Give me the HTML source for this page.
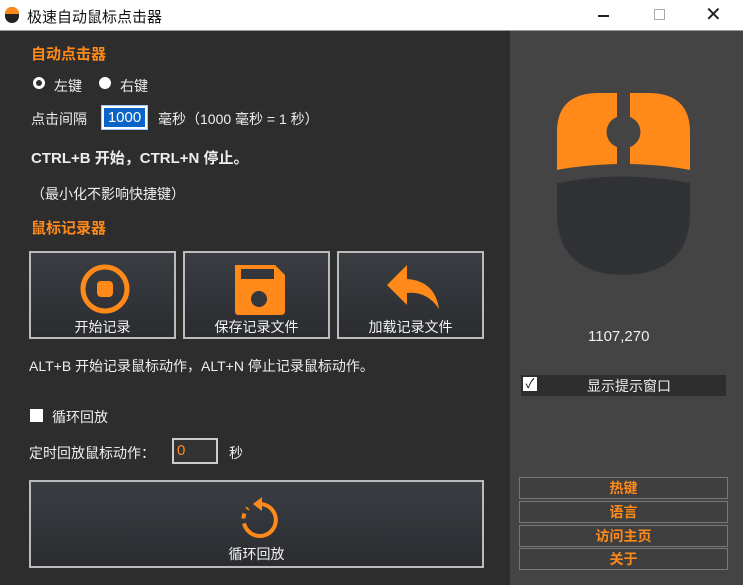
<!DOCTYPE html>
<html><head><meta charset="utf-8"><style>
*{margin:0;padding:0;box-sizing:border-box}
body{width:743px;height:585px;overflow:hidden;background:#2d2d2d;font-family:"Liberation Sans","Noto Sans CJK SC",sans-serif;color:#eee;position:relative;font-size:14px}
.a{position:absolute;white-space:nowrap}
.title{left:0;top:0;width:743px;height:31px;background:#fff;border-bottom:1px solid #999}
.or{color:#ff8a1a;font-weight:bold;font-size:15px}
.btn{position:absolute;border:2px solid #bbb;background:linear-gradient(#3a3d42,#2a2c30);color:#f2f2f2;font-size:14px;text-align:center}
.right{left:510px;top:31px;width:233px;height:554px;background:#444}
.rb{position:absolute;left:519px;width:209px;height:22px;border:1px solid #777;background:#3f3f3f;color:#ff8a1a;font-weight:bold;text-align:center;font-size:14px;line-height:20px}
</style></head><body>
<div class="a title">
  <div class="a" style="left:5px;top:7px;width:14px;height:16px;border-radius:7px;background:#222;overflow:hidden"><div style="height:7px;background:#ff8a1a"></div></div>
  <div class="a" style="left:27px;top:6px;color:#111;font-size:15px">极速自动鼠标点击器</div>
  <div class="a" style="left:598px;top:15px;width:11px;height:1.5px;background:#222"></div>
  <div class="a" style="left:654px;top:9px;width:11px;height:11px;border:1px solid #aaa"></div>
  <div class="a" style="left:705px;top:2px;color:#222;font-size:20px">✕</div>
</div>
<div class="a right"></div>
<div class="a or" style="left:31px;top:43px">自动点击器</div>
<div class="a" style="left:33px;top:77px;width:12px;height:12px;border:3px solid #fff;border-radius:50%"></div>
<div class="a" style="left:54px;top:76px">左键</div>
<div class="a" style="left:99px;top:77px;width:12px;height:12px;background:#fff;border-radius:50%"></div>
<div class="a" style="left:120px;top:76px">右键</div>
<div class="a" style="left:31px;top:109px">点击间隔</div>
<div class="a" style="left:101px;top:105px;width:47px;height:25px;border:1px solid #9cf;background:#fff"><div style="margin:2px;background:#0a64c8;color:#fff;font-size:15px;line-height:19px;text-align:center">1000</div></div>
<div class="a" style="left:158px;top:109px">毫秒（1000 毫秒 = 1 秒）</div>
<div class="a" style="left:31px;top:147px;font-weight:bold;font-size:15px">CTRL+B 开始，CTRL+N 停止。</div>
<div class="a" style="left:31px;top:184px">（最小化不影响快捷键）</div>
<div class="a or" style="left:31px;top:217px">鼠标记录器</div>

<div class="btn" style="left:29px;top:251px;width:147px;height:88px">
<svg width="52" height="52" viewBox="0 0 52 52" style="position:absolute;left:48px;top:10px"><circle cx="26" cy="26" r="22" fill="none" stroke="#ff8a1a" stroke-width="5"/><rect x="18" y="18" width="16" height="16" rx="4" fill="#ff8a1a"/></svg>
<div class="a" style="left:0;width:143px;top:64px">开始记录</div></div>
<div class="btn" style="left:183px;top:251px;width:147px;height:88px">
<svg width="52" height="52" viewBox="0 0 52 52" style="position:absolute;left:48px;top:10px"><path d="M2 2H42L52 12V48Q52 52 48 52H5Q2 52 2 48Z" fill="#ff8a1a"/><rect x="8" y="6" width="33" height="10" fill="#33363a"/><circle cx="26" cy="36" r="8" fill="#33363a"/></svg>
<div class="a" style="left:0;width:143px;top:64px">保存记录文件</div></div>
<div class="btn" style="left:337px;top:251px;width:147px;height:88px">
<svg width="56" height="50" viewBox="0 0 56 50" style="position:absolute;left:46px;top:12px"><path d="M22 0L2 20L22 40V28Q42 26 54 44Q50 16 22 14Z" fill="#ff8a1a"/></svg>
<div class="a" style="left:0;width:143px;top:64px">加载记录文件</div></div>

<div class="a" style="left:29px;top:356px">ALT+B 开始记录鼠标动作，ALT+N 停止记录鼠标动作。</div>
<div class="a" style="left:30px;top:409px;width:13px;height:13px;background:#fff"></div>
<div class="a" style="left:52px;top:407px">循环回放</div>
<div class="a" style="left:29px;top:443px">定时回放鼠标动作：</div>
<div class="a" style="left:172px;top:438px;width:46px;height:26px;border:2px solid #ccc;background:#333;color:#ff8a1a;font-size:15px;padding-left:3px;line-height:22px">0</div>
<div class="a" style="left:229px;top:443px">秒</div>
<div class="btn" style="left:29px;top:480px;width:455px;height:88px">
<svg width="40" height="42" viewBox="0 0 40 42" style="position:absolute;left:209px;top:14px"><path d="M20 8A16 16 0 1 1 6 32" fill="none" stroke="#ff8a1a" stroke-width="4"/><path d="M6 32A16 16 0 0 1 8 12" fill="none" stroke="#ff8a1a" stroke-width="4" stroke-dasharray="5 5"/><path d="M13 8L22 1V15Z" fill="#ff8a1a"/></svg>
<div class="a" style="left:0;width:451px;top:62px">循环回放</div></div>

<svg class="a" style="left:557px;top:92px" width="133" height="184" viewBox="0 0 133 184">
<path d="M0 78V40Q0 2 40 1H60V25A16 16 0 0 0 60 55V72Q25 73 0 78Z" fill="#ff8a1a"/>
<path d="M133 78V40Q133 2 93 1H73V25A16 16 0 0 1 73 55V72Q108 73 133 78Z" fill="#ff8a1a"/>
<path d="M0 91Q66 78 133 91V120Q133 182 66 183Q0 182 0 120Z" fill="#303236"/>
</svg>
<div class="a" style="left:588px;top:328px;font-size:15px">1107,270</div>
<div class="a" style="left:521px;top:375px;width:205px;height:21px;background:#2e2e2e"></div>
<div class="a" style="left:523px;top:377px;width:14px;height:14px;background:#fff;color:#111;font-size:13px;line-height:14px;text-align:center">✓</div>
<div class="a" style="left:587px;top:376px">显示提示窗口</div>
<div class="rb" style="top:477px">热键</div>
<div class="rb" style="top:501px">语言</div>
<div class="rb" style="top:525px">访问主页</div>
<div class="rb" style="top:548px">关于</div>
</body></html>
